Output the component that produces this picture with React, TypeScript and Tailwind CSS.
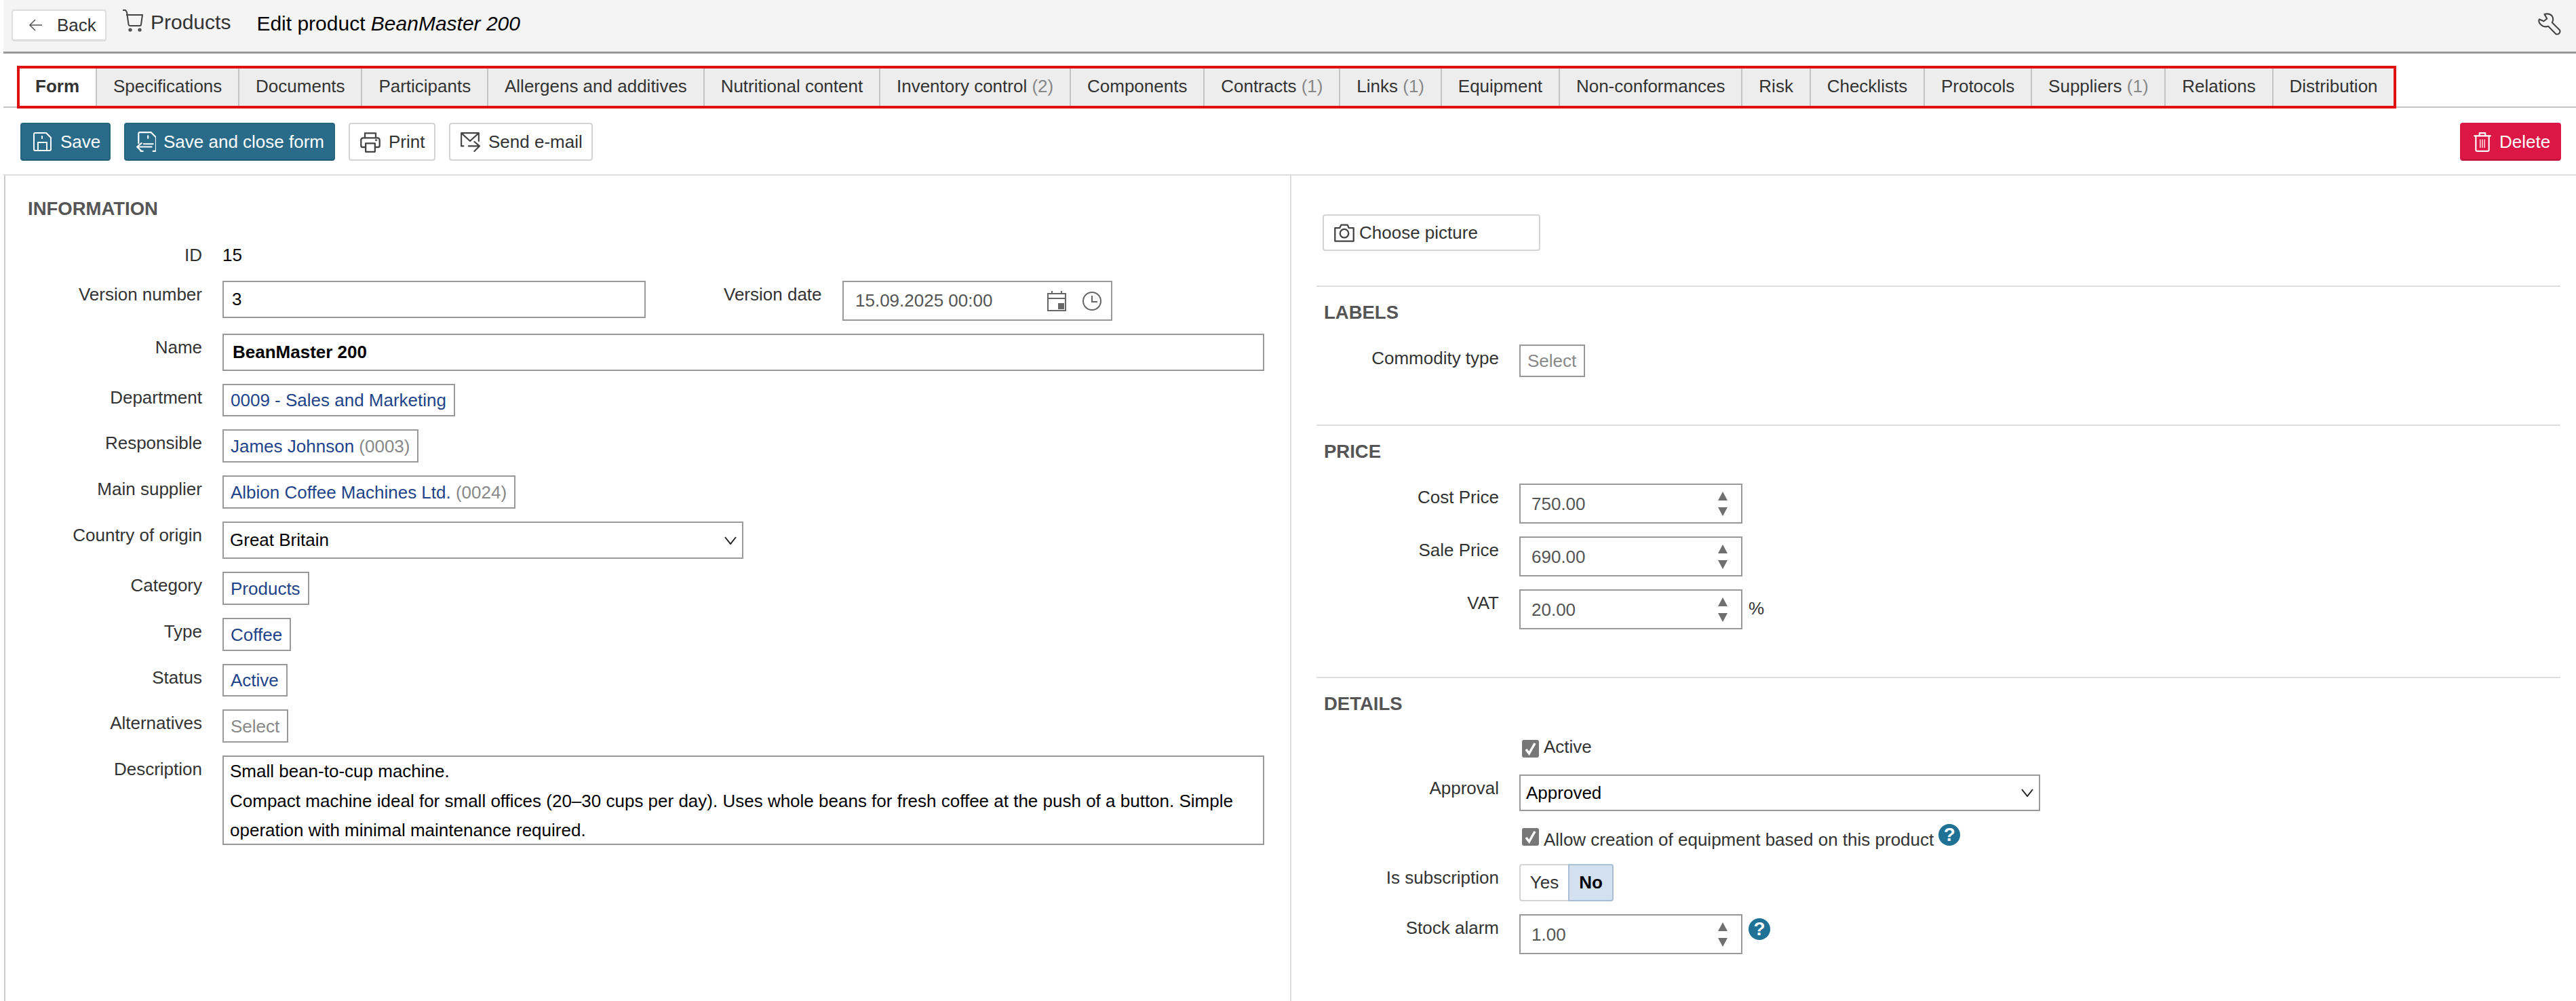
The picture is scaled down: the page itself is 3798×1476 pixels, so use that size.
import React from 'react';

const tabs: { name: string; count?: number }[] = [
  { name: 'Specifications' },
  { name: 'Documents' },
  { name: 'Participants' },
  { name: 'Allergens and additives' },
  { name: 'Nutritional content' },
  { name: 'Inventory control', count: 2 },
  { name: 'Components' },
  { name: 'Contracts', count: 1 },
  { name: 'Links', count: 1 },
  { name: 'Equipment' },
  { name: 'Non-conformances' },
  { name: 'Risk' },
  { name: 'Checklists' },
  { name: 'Protocols' },
  { name: 'Suppliers', count: 1 },
  { name: 'Relations' },
  { name: 'Distribution' },
];

function Icon({ size, className, children }: { size: number; className?: string; children: React.ReactNode }) {
  return (
    <svg width={size} height={size} viewBox="0 0 28 28" fill="none" stroke="currentColor" strokeWidth="2" strokeLinecap="round" strokeLinejoin="round" className={className}>
      {children}
    </svg>
  );
}

function Spinner() {
  return (
    <svg width="16" height="40" viewBox="0 0 16 40" className="text-[#6f6f6f]" fill="currentColor">
      <path d="M8 2 L15 15 L1 15 Z" />
      <path d="M8 38 L15 25 L1 25 Z" />
    </svg>
  );
}

function Chevron() {
  return (
    <svg width="18" height="12" viewBox="0 0 18 12" fill="none" stroke="#222" strokeWidth="2">
      <path d="M1 1 L9 11 L17 1" />
    </svg>
  );
}

function Help() {
  return (
    <span className="flex h-[32px] w-[32px] shrink-0 items-center justify-center rounded-full bg-[#1f7196] text-[28px] leading-none font-bold text-white">?</span>
  );
}

function Heading({ children }: { children: React.ReactNode }) {
  return <h2 className="h-[30px] text-[27.5px] leading-[30px] font-bold text-[#555]">{children}</h2>;
}

function Row({ label, labelWidth, children }: { label?: string; labelWidth: string; children: React.ReactNode }) {
  return (
    <div className="flex items-start gap-[30px]">
      <div className={`${labelWidth} shrink-0 text-right leading-[40px] text-[#333]`}>{label}</div>
      {children}
    </div>
  );
}

function Picker({ children, className }: { children: React.ReactNode; className: string }) {
  return (
    <div className={`flex items-center border-2 border-[#999] pr-[11px] pl-[10px] leading-none whitespace-nowrap text-[#1f4489] ${className}`}>
      {children}
    </div>
  );
}

function NumberBox({ value }: { value: string }) {
  return (
    <div className="flex h-[59px] w-[329px] items-center justify-between border-2 border-[#999] pr-[19px] pl-[16px] text-[#555]">
      <span className="pt-[2px]">{value}</span>
      <Spinner />
    </div>
  );
}

function Check() {
  return (
    <span className="mt-[6px] flex h-[26px] w-[25px] shrink-0 items-center justify-center rounded-[3px] bg-[#777]">
      <svg width="17" height="20" viewBox="0 0 17 20" fill="none" stroke="#fff" strokeWidth="3.5">
        <path d="M2 11 L6.5 17 L15 2" />
      </svg>
    </span>
  );
}

function ToolButton({ className, children }: { className: string; children: React.ReactNode }) {
  return <button className={`flex h-[56px] items-center rounded-[4px] border-2 ${className}`}>{children}</button>;
}

export default function App() {
  const left = 'w-[290px]';
  const right = 'w-[306px]';
  return (
    <div className="flex h-[1476px] w-[3798px] flex-col overflow-hidden bg-white pl-[5px] font-['Liberation_Sans',Arial,sans-serif] text-[26px] text-[#333]">
      <header className="flex h-[79px] shrink-0 items-start border-b-[3px] border-[#999] bg-[#f4f4f4] pr-[22px] pl-[12px]">
        <button className="mt-[14px] flex h-[47px] w-[140px] items-center rounded-[4px] border-2 border-b-[3px] border-[#ddd] bg-white pl-[23px]">
          <svg width="22" height="22" viewBox="0 0 22 22" fill="none" stroke="#555" strokeWidth="1.5">
            <path d="M20 11 H2 M10 3 L2 11 L10 19" />
          </svg>
          <span className="ml-[20px]">Back</span>
        </button>
        <svg width="34" height="34" viewBox="0 0 34 34" fill="none" stroke="#444" strokeWidth="2" strokeLinejoin="round" className="mt-[13px] ml-[23px]">
          <path d="M1 2 H5 L7 5 L9.5 23 Q10 25 12 25 H26 Q28 25 28 23 L30 9 H6" />
          <circle cx="12" cy="31" r="1.6" />
          <circle cx="26" cy="31" r="1.6" />
        </svg>
        <span className="mt-[16px] ml-[8px] text-[30px] leading-[34px]">Products</span>
        <span className="mt-[18px] ml-[38px] text-[30px] leading-[34px] text-black">
          Edit product <em>BeanMaster 200</em>
        </span>
        <svg width="34" height="34" viewBox="0 0 36 36" fill="none" stroke="#444" strokeWidth="2.2" strokeLinejoin="round" className="mt-[19px] ml-auto">
          <path d="M10 2 Q18 0 22 5 Q25 10 22 15 L34 27 Q35 30 33 32 Q31 34 28 33 L16 21 Q9 23 4 18 Q0 14 2 10 L9 13 L14 9 Z" />
        </svg>
      </header>

      <div className="mt-[18px] h-[62px] shrink-0 border-b-2 border-[#c4c4c4] pl-[20px]">
        <div className="flex h-[63px] w-[3508px] border-4 border-[#e01010] bg-[#ededed] leading-[52px]">
          <div className="w-[112px] shrink-0 bg-white pl-[23px] font-bold">Form</div>
          {tabs.map(tab => (
            <div key={tab.name} className="border-l-2 border-[#c4c4c4] px-[23.9px] whitespace-nowrap">
              {tab.name}
              {tab.count !== undefined && <span className="text-[#888]"> ({tab.count})</span>}
            </div>
          ))}
        </div>
      </div>

      <div className="flex h-[100px] shrink-0 items-start gap-[20px] border-b-2 border-[#ddd] pt-[22px] pr-[22px] pl-[25px]">
        <ToolButton className="w-[133px] border-[#266580] border-b-[#1f5a75] bg-[#2a6b8a] pl-[16px] text-white">
          <Icon size={28}>
            <path d="M2 3 Q2 1 4 1 H20 L27 8 V25 Q27 27 25 27 H4 Q2 27 2 25 Z" />
            <path d="M8 27 V15 H21 V27 M14 6 V9" />
          </Icon>
          <span className="ml-[13px]">Save</span>
        </ToolButton>
        <ToolButton className="w-[311px] border-[#266580] border-b-[#1f5a75] bg-[#2a6b8a] pl-[15px] text-white">
          <Icon size={30}>
            <path d="M4 16 V3 Q4 1 6 1 H21 L28 8 V25 Q28 27 26 27 H24 M10 27 H7" />
            <path d="M17 6 V9 M24 17 H11 M22 21 H3 M8 16 L2 21 L8 27" />
          </Icon>
          <span className="ml-[11px]">Save and close form</span>
        </ToolButton>
        <ToolButton className="w-[128px] border-[#d4d4d4] bg-white pl-[14px]">
          <Icon size={32} className="text-[#444]">
            <path d="M7 9 V3 H21 V9 M7 21 H4 Q2 21 2 19 V12 Q2 9 5 9 H23 Q26 9 26 12 V19 Q26 21 24 21 H21" />
            <path d="M8 16 H20 V27 H8 Z M21 12 H22" />
          </Icon>
          <span className="ml-[11px]">Print</span>
        </ToolButton>
        <ToolButton className="w-[212px] border-[#d4d4d4] bg-white pl-[14px]">
          <Icon size={30} className="text-[#444]">
            <path d="M5 20 H2 V2 H26 V13 M2 2 L14 13 L26 2 M12 20 H26 M20 14 L27 20 L20 27" />
          </Icon>
          <span className="ml-[12px]">Send e-mail</span>
        </ToolButton>
        <ToolButton className="ml-auto w-[149px] border-[#dc1745] border-b-[#b8123a] bg-[#dc1745] pl-[16px] text-white">
          <Icon size={30} className="shrink-0">
            <path d="M3 6 H25 M10 6 V2 H18 V6 M5 6 V25 Q5 27 7 27 H21 Q23 27 23 25 V6" />
            <path d="M11 11 V22 M14 11 V22 M17 11 V22" strokeWidth="1.2" />
          </Icon>
          <span className="ml-[10px]">Delete</span>
        </ToolButton>
      </div>

      <div className="flex min-h-0 flex-1">
        <div className="ml-[1px] flex w-[1896px] shrink-0 flex-col gap-[19px] border-l-2 border-[#ccc] pt-[34px]">
          <div className="pl-[33px]">
            <Heading>INFORMATION</Heading>
          </div>
          <div className="mt-[14px] flex h-[39px] items-start gap-[30px]">
            <div className={`${left} text-right leading-[40px]`}>ID</div>
            <div className="leading-[40px] text-black">15</div>
          </div>
          <div className="flex h-[59px] items-start">
            <Row label="Version number" labelWidth={left}>
              <div className="flex h-[55px] w-[624px] items-center border-2 border-[#999] pl-[12px] text-black">3</div>
            </Row>
            <div className="ml-[115px] w-[144px] leading-[40px] whitespace-nowrap">Version date</div>
            <div className="ml-[31px] flex h-[59px] w-[398px] items-center border-2 border-[#999] pl-[17px] text-[#555]">
              <span className="w-[201px] shrink-0 whitespace-nowrap">15.09.2025 00:00</span>
              <svg width="30" height="32" viewBox="0 0 30 32" fill="none" stroke="#666" strokeWidth="2" className="ml-[81px] shrink-0">
                <path d="M2 5 H28 V30 H2 Z M2 12 H28 M8 1 V6 M22 1 V6" />
                <rect x="17" y="19" width="9" height="9" fill="#666" stroke="none" />
              </svg>
              <svg width="28" height="28" viewBox="0 0 28 28" fill="none" stroke="#666" strokeWidth="2" className="ml-[23px] shrink-0">
                <circle cx="14" cy="14" r="13" />
                <path d="M14 6 V15 H22" />
              </svg>
            </div>
          </div>
          <Row label="Name" labelWidth={left}>
            <div className="flex h-[55px] w-[1536px] items-center border-2 border-[#999] pl-[13px] font-bold text-black">BeanMaster 200</div>
          </Row>
          <Row label="Department" labelWidth={left}>
            <Picker className="h-[48px]">0009 - Sales and Marketing</Picker>
          </Row>
          <Row label="Responsible" labelWidth={left}>
            <Picker className="h-[49px]">
              <span>James Johnson <span className="text-[#888]">(0003)</span></span>
            </Picker>
          </Row>
          <Row label="Main supplier" labelWidth={left}>
            <Picker className="h-[49px]">
              <span>Albion Coffee Machines Ltd. <span className="text-[#888]">(0024)</span></span>
            </Picker>
          </Row>
          <Row label="Country of origin" labelWidth={left}>
            <div className="flex h-[55px] w-[768px] items-center justify-between border-2 border-[#999] pr-[8px] pl-[9px] text-black">
              <span>Great Britain</span>
              <Chevron />
            </div>
          </Row>
          <Row label="Category" labelWidth={left}>
            <Picker className="h-[49px]">Products</Picker>
          </Row>
          <Row label="Type" labelWidth={left}>
            <Picker className="h-[49px]">Coffee</Picker>
          </Row>
          <Row label="Status" labelWidth={left}>
            <Picker className="h-[48px]">Active</Picker>
          </Row>
          <Row label="Alternatives" labelWidth={left}>
            <Picker className="h-[49px] !text-[#888]">Select</Picker>
          </Row>
          <Row label="Description" labelWidth={left}>
            <div className="h-[132px] w-[1536px] border-2 border-[#999] pl-[9px] leading-[43.5px] whitespace-nowrap text-black">
              Small bean-to-cup machine.
              <br />
              Compact machine ideal for small offices (20–30 cups per day). Uses whole beans for fresh coffee at the push of a button. Simple
              <br />
              operation with minimal maintenance required.
            </div>
          </Row>
        </div>

        <div className="flex-1 border-l-2 border-[#ddd] pt-[57px]">
          <button className="ml-[46px] flex h-[54px] w-[321px] items-center rounded-[4px] border-2 border-[#d4d4d4] bg-white pl-[14px]">
            <Icon size={32} className="text-[#444]">
              <path d="M2 8 H8 L10 4 H18 L20 8 H26 V25 H2 Z" />
              <circle cx="14" cy="15" r="5.5" />
            </Icon>
            <span className="ml-[6px]">Choose picture</span>
          </button>

          <section className="mt-[51px] mr-[23px] ml-[37px] border-t-[2px] border-[#ddd] pt-[23px]">
            <div className="pl-[11px]">
              <Heading>LABELS</Heading>
            </div>
            <div className="-ml-[37px] mt-[32px] flex h-[48px]">
              <Row label="Commodity type" labelWidth={right}>
                <Picker className="h-[48px] !text-[#888]">Select</Picker>
              </Row>
            </div>
          </section>

          <section className="mt-[70px] mr-[23px] ml-[37px] border-t-[2px] border-[#ddd] pt-[23px]">
            <div className="pl-[11px]">
              <Heading>PRICE</Heading>
            </div>
            <div className="-ml-[37px] mt-[32px] flex flex-col gap-[19px]">
              <Row label="Cost Price" labelWidth={right}>
                <NumberBox value="750.00" />
              </Row>
              <Row label="Sale Price" labelWidth={right}>
                <NumberBox value="690.00" />
              </Row>
              <Row label="VAT" labelWidth={right}>
                <div className="flex items-start gap-[9px]">
                  <NumberBox value="20.00" />
                  <span className="leading-[56px]">%</span>
                </div>
              </Row>
            </div>
          </section>

          <section className="mt-[70px] mr-[23px] ml-[37px] border-t-[2px] border-[#ddd] pt-[23px]">
            <div className="pl-[11px]">
              <Heading>DETAILS</Heading>
            </div>
            <div className="-ml-[37px] mt-[32px] flex flex-col gap-[19px]">
              <Row labelWidth={right}>
                <div className="flex h-[38px] gap-[7px] pl-[4px]">
                  <Check />
                  <span className="leading-[32px]">Active</span>
                </div>
              </Row>
              <Row label="Approval" labelWidth={right}>
                <div className="flex h-[54px] w-[768px] items-center justify-between border-2 border-[#999] pr-[8px] pl-[8px] text-black">
                  <span>Approved</span>
                  <Chevron />
                </div>
              </Row>
              <Row labelWidth={right}>
                <div className="flex h-[40px] items-start gap-[7px] pl-[4px]">
                  <Check />
                  <span className="pt-[3px] leading-[40px] whitespace-nowrap">Allow creation of equipment based on this product</span>
                  <Help />
                </div>
              </Row>
              <Row label="Is subscription" labelWidth={right}>
                <div className="flex h-[55px]">
                  <div className="flex w-[72px] items-center justify-center rounded-l-[4px] border-2 border-r-0 border-[#d4d4d4] bg-white">Yes</div>
                  <div className="flex w-[67px] items-center justify-center rounded-r-[4px] border-2 border-[#a9bdd4] bg-[#d3e0f0] font-bold text-black">No</div>
                </div>
              </Row>
              <Row label="Stock alarm" labelWidth={right}>
                <div className="flex items-start gap-[9px]">
                  <NumberBox value="1.00" />
                  <div className="mt-[6px]">
                    <Help />
                  </div>
                </div>
              </Row>
            </div>
          </section>
        </div>
      </div>
    </div>
  );
}
